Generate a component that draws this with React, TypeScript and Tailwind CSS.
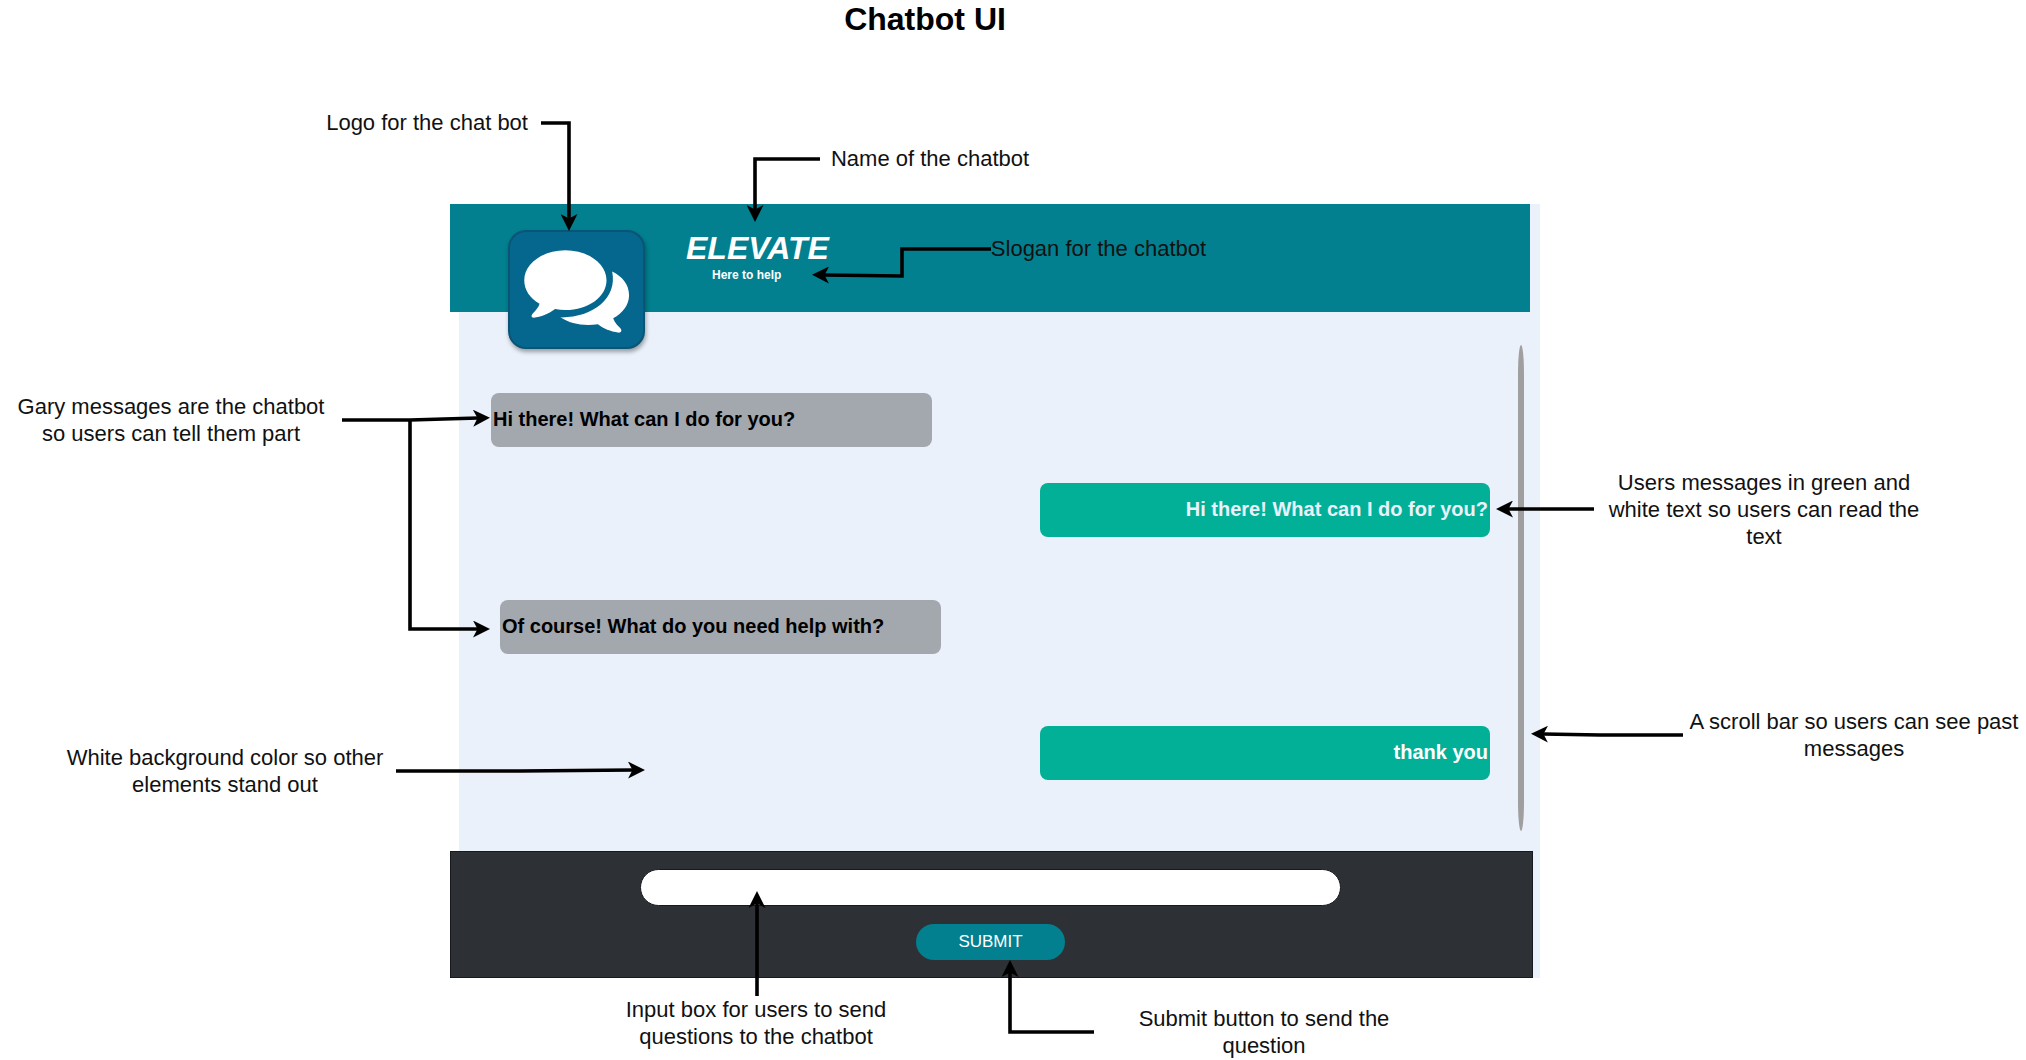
import type { ReactNode } from "react";

type Message = {
  text: string;
  className: string;
};

const messages: Message[] = [
  {
    text: "Hi there! What can I do for you?",
    className: "ml-8 w-[441px] self-start bg-[#a3a7ae] text-black",
  },
  {
    text: "Hi there! What can I do for you?",
    className: "mt-9 w-[450px] self-end bg-[#02b097] text-right text-[#eaf1fa]",
  },
  {
    text: "Of course! What do you need help with?",
    className: "mt-[63px] ml-[41px] w-[441px] self-start bg-[#a3a7ae] text-black",
  },
  {
    text: "thank you",
    className: "mt-[72px] w-[450px] self-end bg-[#02b097] text-right text-white",
  },
];

const arrows = [
  "M541 123H569V219",
  "M820 159H755V210",
  "M991 249H902V276L824 275",
  "M342 420H410L478 418",
  "M410 420V629H478",
  "M1594 509H1508",
  "M1683 735H1600L1543 734",
  "M396 771H520L633 770",
  "M757 996V903",
  "M1094 1032H1010V972",
];

function Callout({ className = "", children }: { className?: string; children: ReactNode }) {
  return <p className={`text-[22px] leading-[27px] text-[#111] ${className}`}>{children}</p>;
}

function Arrows() {
  return (
    <svg
      className="pointer-events-none absolute inset-x-0 top-0 z-20 h-[1060px] w-full"
      viewBox="0 0 2026 1060"
      preserveAspectRatio="none"
      fill="none"
      aria-hidden="true"
    >
      <defs>
        <marker
          id="arrowhead"
          markerUnits="userSpaceOnUse"
          markerWidth="17"
          markerHeight="17"
          refX="5"
          refY="8.5"
          orient="auto"
        >
          <path d="M0 0L17 8.5L0 17L4.5 8.5Z" fill="#000" />
        </marker>
      </defs>
      {arrows.map((d) => (
        <path key={d} d={d} stroke="#000" strokeWidth="3.6" markerEnd="url(#arrowhead)" />
      ))}
    </svg>
  );
}

function Logo() {
  return (
    <div className="mt-[26px] ml-[58px] h-[119px] w-[137px] shrink-0 overflow-hidden rounded-[18px] border-2 border-[#0a5576] bg-[#05668e] shadow-[1px_3px_4px_rgba(0,0,0,0.35)]">
      <svg className="size-full" viewBox="209 125 401 346" role="img" aria-label="Chat bubbles">
        <g fill="#fff">
          <path d="M376 180C445 180 500 220 500 270C500 320 445 360 376 360C365 360 355 359 345 357C324 372 302 382 281 383C273 383 272 377 277 371C287 361 295 352 298 341C268 323 252 299 252 270C252 220 307 180 376 180Z" />
          <path d="M517 244C549 259 568 285 568 315C568 343 550 368 520 385C525 398 532 406 542 415C548 423 544 429 535 428C513 425 490 416 474 403C431 409 390 402 361 382C456 384 534 326 517 244Z" />
        </g>
      </svg>
    </div>
  );
}

export default function App() {
  return (
    <main className="relative overflow-hidden bg-white font-['Liberation_Sans',Arial,sans-serif]">
      <h1 className="pr-44 text-center text-[32px] leading-[39px] font-bold text-black">Chatbot UI</h1>

      <div className="flex h-[165px] pl-[16%] whitespace-nowrap">
        <Callout className="mt-[70px] ml-0.5">Logo for the chat bot</Callout>
        <Callout className="mt-[106px] ml-[303px]">Name of the chatbot</Callout>
      </div>

      <div className="grid grid-cols-[450fr_1090fr_486fr]">
        <aside className="text-center">
          <Callout className="mt-[189px] ml-[11px] w-[320px]">
            Gary messages are the chatbot so users can tell them part
          </Callout>
          <Callout className="mt-[297px] ml-[60px] w-[330px]">
            White background color so other elements stand out
          </Callout>
        </aside>

        <section aria-label="Elevate chat">
          <div className="relative z-10 flex bg-[#eaf1fa]">
            <header className="mr-[10px] flex h-[108px] flex-1 items-start bg-[#02808f]">
              <Logo />
              <div className="mt-[26px] ml-[41px] text-white">
                <h2 className="text-[32px] leading-9 font-bold italic">ELEVATE</h2>
                <p className="pl-[26px] text-xs leading-[18px] font-bold">Here to help</p>
              </div>
              <Callout className="mt-[31px] ml-[15%] whitespace-nowrap">Slogan for the chatbot</Callout>
            </header>
          </div>

          <div className="ml-[9px] flex h-[539px] items-start bg-[#eaf1fa]">
            <ul className="mr-7 flex flex-1 flex-col pt-[81px]">
              {messages.map((message, index) => (
                <li
                  key={index}
                  className={`h-[54px] rounded-lg px-0.5 text-xl leading-[52px] font-bold ${message.className}`}
                >
                  {message.text}
                </li>
              ))}
            </ul>
            <div className="mt-[33px] mr-4 h-[486px] w-[6px] rounded-[50%/6%] bg-[#9f9f9f]" aria-hidden="true" />
          </div>

          <div className="bg-[#eaf1fa]">
            <form
              className="mr-[7px] flex h-[127px] flex-col items-center gap-[18px] border border-[#17191c] bg-[#2d3035] pt-[17px] pr-0.5"
              onSubmit={(event) => event.preventDefault()}
            >
              <input
                type="text"
                aria-label="Message"
                className="h-[37px] w-[65%] rounded-full border border-[#17191c] bg-white px-5 text-xl text-black outline-none"
              />
              <button type="submit" className="h-9 w-[149px] rounded-full bg-[#02808f] text-[17px] text-white">
                SUBMIT
              </button>
            </form>
          </div>
        </section>

        <aside className="text-center">
          <Callout className="mt-[265px] ml-[62px] w-[324px]">
            Users messages in green and white text so users can read the text
          </Callout>
          <Callout className="mt-[158px] ml-[142px] w-[344px]">
            A scroll bar so users can see past messages
          </Callout>
        </aside>

        <div className="col-start-2 flex items-start text-center">
          <Callout className="mt-[18px] ml-[166px] w-[280px]">
            Input box for users to send questions to the chatbot
          </Callout>
          <Callout className="mt-[27px] mb-px ml-[233px] w-[270px]">Submit button to send the question</Callout>
        </div>
      </div>

      <Arrows />
    </main>
  );
}
